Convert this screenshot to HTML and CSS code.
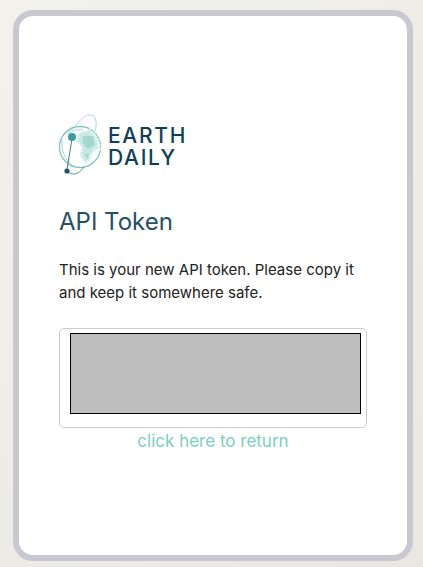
FILE: index.html
```html
<!DOCTYPE html>
<html lang="en">
<head>
    <meta charset="UTF-8">
    <meta name="viewport" content="width=device-width, initial-scale=1.0">
    <title>API Token</title>
    <link rel="stylesheet" href="styles.css">
</head>
<body>
    <section class="card">
        <!-- Logo -->
        <div class="logo">
            <svg class="logo-mark" width="50" height="62" viewBox="0 0 50 62" fill="none">
                <path d="M16 14C22 5 29 0 33 1C39 2 39 10 37 17" stroke="#a5d8d2" stroke-width="1"/>
                <circle cx="22" cy="33" r="20.5" stroke="#7fc4bd" stroke-width="1.3"/>
                <path d="M10 19C15 16 20 15 25 16" stroke="#a5d8d2" stroke-width="2.5" stroke-dasharray="1 1"/>
                <path d="M20 19L32 16L39 24L41 34L35 38L31 47L27 50L22 41L24 33L18 27Z" fill="#c5e8e2"/>
                <path d="M20 19L32 16L39 24L41 34L35 38L31 47L27 50L22 41L24 33L18 27Z" stroke="#ffffff" stroke-width="5" stroke-dasharray="1 2" opacity="0.7"/>
                <path d="M25 22L35 22L37 31L30 35L25 30ZM27 40L31 40L29 46Z" fill="#7fc4bd" opacity="0.45"/>
                <path d="M4 26C3 36 7 46 14 51" stroke="#a5d8d2" stroke-width="1"/>
                <path d="M14 25L9 55" stroke="#2c6a78" stroke-width="0.9"/>
                <path d="M9 57C14 62 20 61 26 53" stroke="#5d96a0" stroke-width="1"/>
                <circle cx="14" cy="23" r="4" fill="#3f9c9a"/>
                <circle cx="9" cy="57" r="2.6" fill="#1f5566"/>
            </svg>
            <div class="logo-text">EARTH<br>DAILY</div>
        </div>

        <h1>API Token</h1>
        <p class="intro">This is your new API token. Please copy it and keep it somewhere safe.</p>

        <!-- Token box -->
        <div class="token-box">
            <div class="token-hidden"></div>
        </div>
        <a class="return-link" href="#">click here to return</a>
    </section>
</body>
</html>
```

FILE: styles.css
```css
/* Basic Reset */
* {
    margin: 0;
    padding: 0;
    box-sizing: border-box;
}

body {
    width: 423px;
    height: 567px;
    overflow: hidden;
    font-family: "Inter", "Liberation Sans", sans-serif;
    background: linear-gradient(135deg, #f3f1ec, #eae7e2);
    padding: 10px 10px 6px 13px;
}

.card {
    width: 400px;
    height: 551px;
    padding: 98px 40px 0 40px;
    background-color: white;
    border: 6px solid #c8c9d0;
    border-radius: 20px;
}

.logo {
    display: flex;
    align-items: center;
    gap: 0;
    margin-left: -1px;
}

.logo-mark {
    flex: none;
}

.logo-text {
    font-size: 21px;
    line-height: 22px;
    font-weight: 500;
    letter-spacing: 1.7px;
    color: #123f58;
    margin-top: 3px;
}

h1 {
    font-size: 24px;
    line-height: 30px;
    font-weight: 400;
    color: #264f68;
    margin-top: 31px;
}

.intro {
    font-size: 15px;
    line-height: 23px;
    color: #222;
    margin-top: 21px;
}

.token-box {
    width: 308px;
    height: 100px;
    margin-top: 24px;
    padding: 4px 5px 0 10px;
    border: 1px solid #cccccc;
    border-radius: 5px;
}

.token-hidden {
    height: 81px;
    background-color: #bebebe;
    border: 1px solid black;
}

.return-link {
    display: block;
    width: 308px;
    text-align: center;
    font-size: 17px;
    line-height: 27px;
    color: #7bcfc2;
    text-decoration: none;
}
```
